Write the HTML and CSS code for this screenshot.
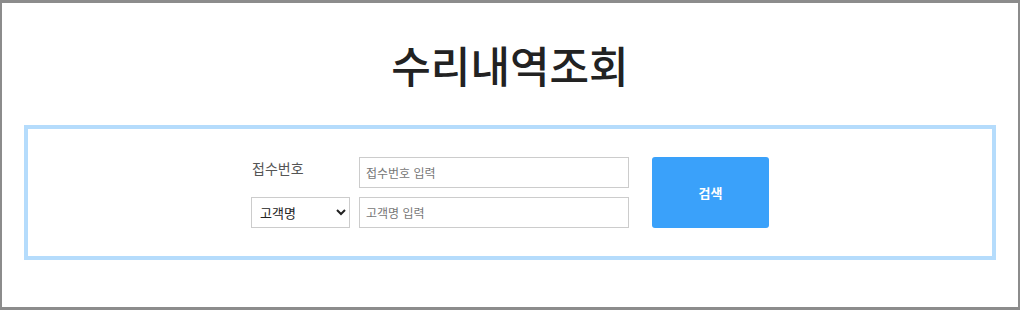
FILE: index.html
```html
<!DOCTYPE html>
<html lang="ko">
<head>
  <meta charset="UTF-8" />
  <meta name="viewport" content="width=device-width, initial-scale=1" />
  <title>수리내역조회</title>
  <link rel="stylesheet" href="styles.css">
</head>
<body>

<div class="page">
  <h1>수리내역조회</h1>

  <!-- 조회 박스 -->
  <div class="search-box">
    <form class="search-form" onsubmit="return false;">
      <div class="fields">
        <div class="field-row">
          <label class="field-label" for="receiptNo">접수번호</label>
          <input type="text" id="receiptNo" class="field-input" placeholder="접수번호 입력">
        </div>
        <div class="field-row">
          <select class="field-select">
            <option>고객명</option>
            <option>연락처</option>
          </select>
          <input type="text" class="field-input" placeholder="고객명 입력">
        </div>
      </div>
      <button type="submit" class="search-btn">검색</button>
    </form>
  </div>
</div>

</body>
</html>
```

FILE: styles.css
```css
    * {
      box-sizing: border-box;
    }

    body {
      margin: 0;
      font-family: 'Noto Sans CJK KR', 'Noto Sans', sans-serif;
      background-color: #fff;
      color: #222;
    }

    .page {
      height: 310px;
      border-style: solid;
      border-color: #8c8c8c;
      border-width: 3px 2px;
      padding: 0 22px;
    }

    h1 {
      margin: 0;
      padding: 36px 0;
      font-size: 43px;
      line-height: 50px;
      font-weight: 500;
      text-align: center;
      color: #222;
    }

    .search-box {
      border: 4px solid #b5dcfc;
      padding: 28px 0;
    }

    .search-form {
      display: flex;
      justify-content: center;
      gap: 23px;
    }

    .fields {
      display: flex;
      flex-direction: column;
      gap: 9px;
    }

    .field-row {
      display: flex;
      gap: 9px;
      height: 31px;
    }

    .field-label {
      width: 99px;
      padding: 1px 0 0 1px;
      font-size: 14px;
      color: #555;
    }

    .field-select {
      width: 99px;
      height: 31px;
      border: 1px solid #ccc;
      background: #fff;
      font-family: inherit;
      font-size: 13px;
      color: #222;
      padding: 0 4px;
      border-radius: 0;
    }

    .field-input {
      width: 270px;
      height: 31px;
      border: 1px solid #ccc;
      padding: 0 6px;
      font-family: inherit;
      font-size: 12px;
      color: #333;
      outline: none;
    }

    .field-input::placeholder {
      color: #777;
    }

    .search-btn {
      width: 117px;
      height: 71px;
      border: none;
      border-radius: 3px;
      background-color: #3aa1fa;
      color: #fff;
      font-family: inherit;
      font-size: 13px;
      font-weight: bold;
      cursor: pointer;
    }

    .search-btn:hover {
      background-color: #2890ea;
    }
```
